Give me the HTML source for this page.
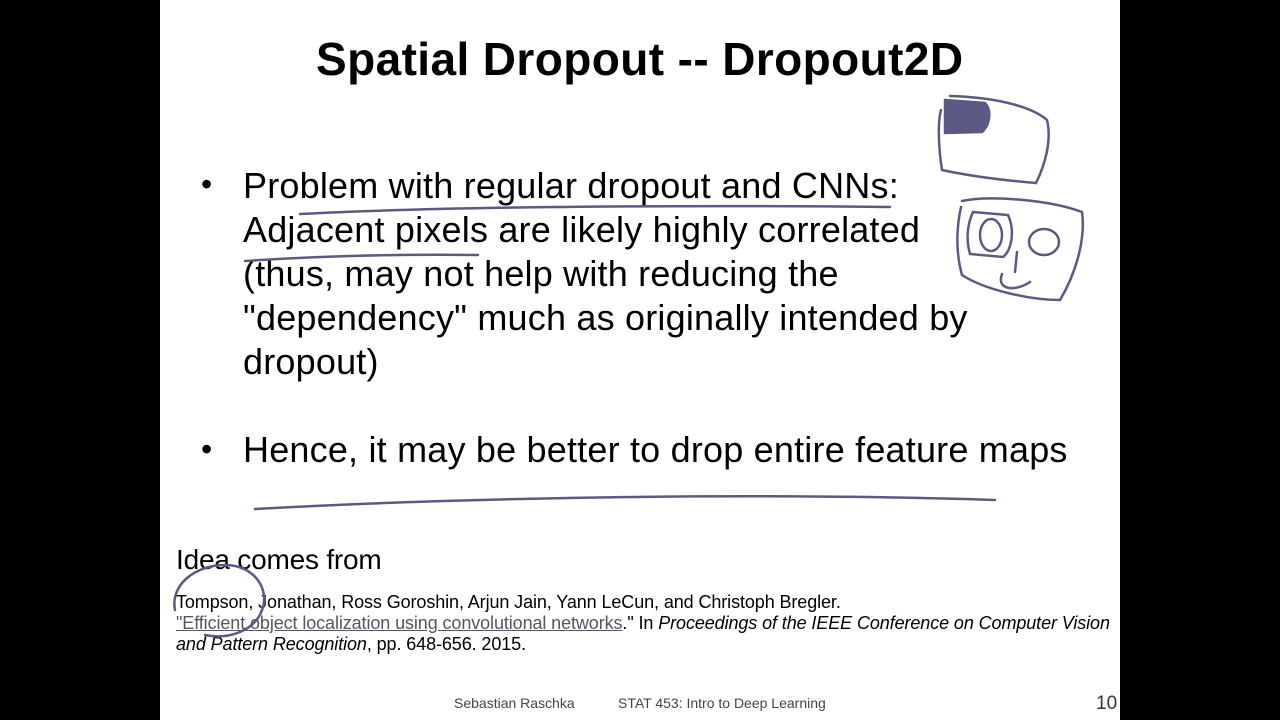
<!DOCTYPE html>
<html><head><style>
body{margin:0;width:1280px;height:720px;background:#000;position:relative;overflow:hidden;font-family:"Liberation Sans",Arial,sans-serif}
#s{position:absolute;left:160px;top:0;width:960px;height:720px;background:#fff}
.t{position:absolute;white-space:nowrap;color:#000}
</style></head><body>
<div id="s"></div>
<div class="t" style="left:316px;top:32px;font-size:46px;font-weight:bold;letter-spacing:0.4px">Spatial Dropout -- Dropout2D</div>
<div class="t" style="left:201px;top:166px;font-size:32px">•</div>
<div class="t" style="left:243px;top:164px;font-size:36px;line-height:44px;letter-spacing:0.2px">Problem with regular dropout and CNNs:<br>Adjacent pixels are likely highly correlated<br>(thus, may not help with reducing the<br>"dependency" much as originally intended by<br>dropout)</div>
<div class="t" style="left:201px;top:431px;font-size:32px">•</div>
<div class="t" style="left:243px;top:428px;font-size:36px;line-height:44px;letter-spacing:0.2px">Hence, it may be better to drop entire feature maps</div>
<div class="t" style="left:176px;top:544px;font-size:28px;letter-spacing:-0.2px">Idea comes from</div>
<div class="t" style="left:176px;top:592px;font-size:18px;line-height:21px;letter-spacing:-0.1px">Tompson, Jonathan, Ross Goroshin, Arjun Jain, Yann LeCun, and Christoph Bregler.<br><span style="color:#556;text-decoration:underline">"Efficient object localization using convolutional networks</span>." In <i>Proceedings of the IEEE Conference on Computer Vision</i><br><i>and Pattern Recognition</i>, pp. 648-656. 2015.</div>
<div class="t" style="left:454px;top:695px;font-size:14px;color:#444">Sebastian Raschka</div>
<div class="t" style="left:618px;top:695px;font-size:14px;color:#444">STAT 453: Intro to Deep Learning</div>
<div class="t" style="left:1096px;top:693px;font-size:19px;color:#333">10</div>
<svg style="position:absolute;left:0;top:0" width="1280" height="720" fill="none" stroke="#5a5a85" stroke-width="2.5" stroke-linecap="round">
<path d="M300 214 C450 206 700 205 890 207"/>
<path d="M245 261 C320 256 400 254 478 255"/>
<path d="M255 509 C450 498 750 492 995 500"/>
<path d="M175 610 C170 585 195 565 225 565 C255 565 270 590 262 610 C255 630 230 640 205 635"/>
<path d="M950 96 C990 97 1030 105 1047 120 C1052 140 1045 165 1036 183 C1000 180 965 175 942 170 C938 145 938 120 941 110"/>
<path d="M945 100 L985 103 C992 110 990 125 982 132 L945 133 Z" fill="#5a5a85"/>
<path d="M962 201 C990 195 1050 200 1082 212 C1086 240 1075 275 1060 300 C1030 300 985 290 962 275 C955 250 957 225 961 207"/>
<path d="M973 212 L1008 215 C1015 230 1012 250 1003 257 L970 254 C966 240 967 225 973 212Z"/>
<ellipse cx="991" cy="235" rx="11" ry="16"/>
<ellipse cx="1044" cy="242" rx="15" ry="13"/>
<path d="M1017 252 L1015 272"/>
<path d="M1002 274 C996 290 1015 292 1030 282"/>
</svg>
</body></html>
